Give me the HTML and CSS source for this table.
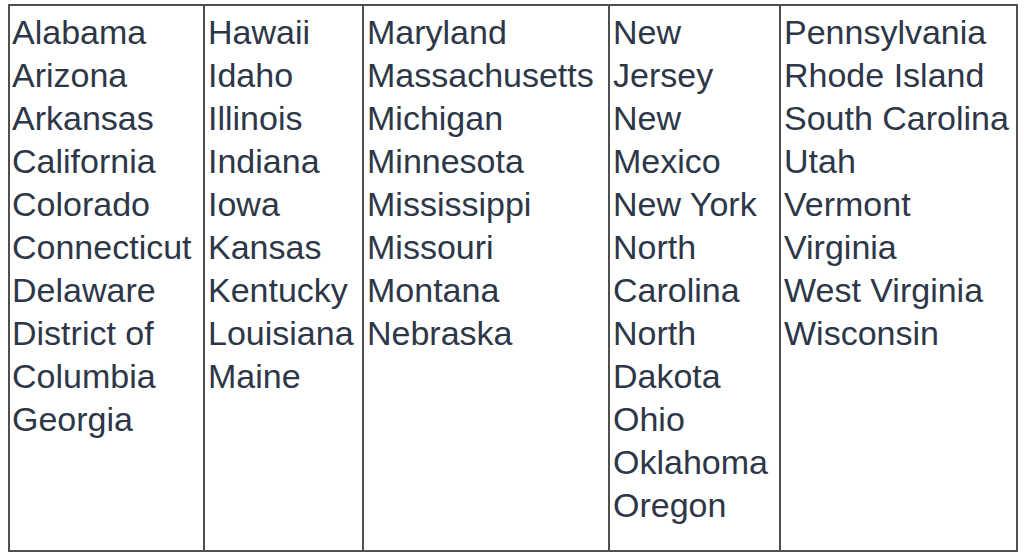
FILE: index.html
```html
<!DOCTYPE html>
<html lang="en">
<head>
<meta charset="utf-8">
<title>States</title>
<link rel="stylesheet" href="styles.css">
</head>
<body>
<div class="states">
  <ul class="col c1">
    <li>Alabama</li><li>Arizona</li><li>Arkansas</li><li>California</li><li>Colorado</li><li>Connecticut</li><li>Delaware</li><li>District of Columbia</li><li>Georgia</li>
  </ul>
  <ul class="col c2">
    <li>Hawaii</li><li>Idaho</li><li>Illinois</li><li>Indiana</li><li>Iowa</li><li>Kansas</li><li>Kentucky</li><li>Louisiana</li><li>Maine</li>
  </ul>
  <ul class="col c3">
    <li>Maryland</li><li>Massachusetts</li><li>Michigan</li><li>Minnesota</li><li>Mississippi</li><li>Missouri</li><li>Montana</li><li>Nebraska</li>
  </ul>
  <ul class="col c4">
    <li>New Jersey</li><li>New Mexico</li><li>New York</li><li>North Carolina</li><li>North Dakota</li><li>Ohio</li><li>Oklahoma</li><li>Oregon</li>
  </ul>
  <ul class="col c5">
    <li>Pennsylvania</li><li>Rhode Island</li><li>South Carolina</li><li>Utah</li><li>Vermont</li><li>Virginia</li><li>West Virginia</li><li>Wisconsin</li>
  </ul>
</div>
</body>
</html>
```
FILE: styles.css
```css
html, body {
  margin: 0;
  padding: 0;
  background: #ffffff;
}
body {
  padding: 4px 0 0 8px;
  font-family: "Liberation Sans", Arial, sans-serif;
  font-size: 34px;
  line-height: 43px;
  color: #2d3748;
}
.states {
  display: grid;
  grid-template-columns: 193px 159px 246px 171px 237px;
  width: 1010px;
  height: 548px;
  box-sizing: border-box;
  border: 2px solid #4f4f4f;
}
.col {
  list-style: none;
  margin: 0;
  padding: 5px 1px 0 3px;
  border-left: 2px solid #4f4f4f;
}
.col.c1 {
  border-left: none;
  padding-left: 2px;
}
.col li {
  margin: 0;
  padding: 0;
}
```
